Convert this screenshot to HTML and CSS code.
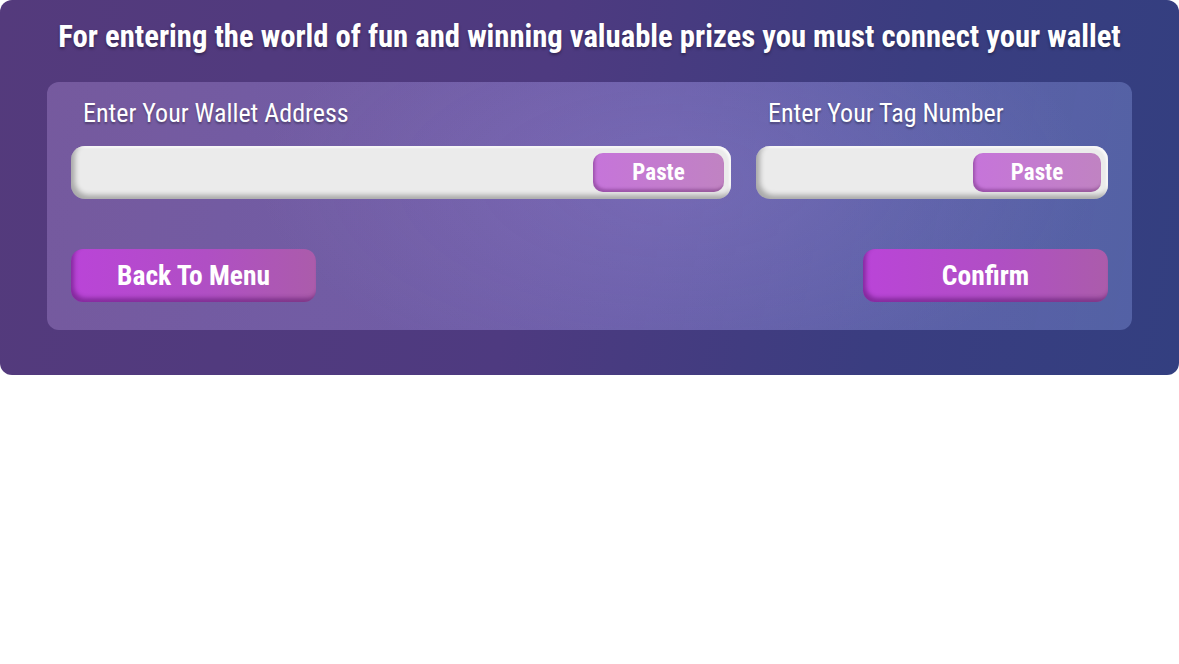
FILE: index.html
```html
<!DOCTYPE html>
<html lang="en">
<head>
<meta charset="utf-8">
<title>Connect Wallet</title>
<link rel="stylesheet" href="styles.css">
</head>
<body>
<main class="modal">
  <h1 class="title">For entering the world of fun and winning valuable prizes you must connect your wallet</h1>
  <section class="panel">
    <div class="fields">
      <div class="field field-wallet">
        <label class="label">Enter Your Wallet Address</label>
        <div class="input">
          <span class="input-space"></span>
          <button class="paste">Paste</button>
        </div>
      </div>
      <div class="field field-tag">
        <label class="label">Enter Your Tag Number</label>
        <div class="input">
          <span class="input-space"></span>
          <button class="paste paste-tag">Paste</button>
        </div>
      </div>
    </div>
    <div class="actions">
      <button class="btn">Back To Menu</button>
      <button class="btn">Confirm</button>
    </div>
  </section>
</main>
</body>
</html>
```
FILE: styles.css
```css
* { box-sizing: border-box; }
html, body { margin: 0; padding: 0; background: #ffffff; }
body { font-family: "Roboto Condensed", Roboto, "Liberation Sans", sans-serif; }

.modal {
  width: 1179px;
  height: 375px;
  border-radius: 12px;
  background: linear-gradient(100deg, #543a7c 0%, #4e3a80 45%, #3a3d80 75%, #333f80 100%);
  padding: 17px 47px 0 47px;
  display: flex;
  flex-direction: column;
  align-items: stretch;
}

.title {
  margin: 0;
  text-align: center;
  color: #fff;
  font-weight: 700;
  font-size: 30.7px;
  line-height: 40px;
  letter-spacing: 0;
  text-shadow: 0 2px 3px rgba(0,0,0,0.35);
  white-space: nowrap;
}

.panel {
  margin-top: 25px;
  height: 248px;
  border-radius: 12px;
  background:
    radial-gradient(ellipse 420px 200px at 58% 40%, rgba(170,150,230,0.18), rgba(170,150,230,0) 100%),
    linear-gradient(100deg, rgba(160,130,200,0.45) 0%, rgba(150,140,220,0.45) 55%, rgba(130,150,220,0.4) 100%);
  padding: 13px 24px 0 24px;
  display: flex;
  flex-direction: column;
}

.fields { display: flex; gap: 25px; }
.field { display: flex; flex-direction: column; }
.field-wallet { width: 660px; }
.field-tag { flex: 1; }

.label {
  color: #fff;
  font-size: 26px;
  line-height: 36px;
  padding-left: 12px;
  text-shadow: 0 2px 2px rgba(0,0,0,0.3);
}

.input {
  margin-top: 15px;
  height: 53px;
  border-radius: 14px;
  background: #ebebeb;
  box-shadow: inset 4px -4px 5px rgba(0,0,0,0.28), inset -2px 2px 2px rgba(255,255,255,0.7);
  display: flex;
  align-items: center;
  padding: 0 7px 0 0;
}
.input-space { flex: 1; }

.paste {
  width: 131px;
  height: 39px;
  border: none;
  border-radius: 10px;
  background: linear-gradient(90deg, #c674da 0%, #c083c2 100%);
  color: #fff;
  font-family: inherit;
  font-weight: 700;
  font-size: 23px;
  box-shadow: inset 2px -3px 3px rgba(80,20,90,0.35);
  padding: 0;
}
.paste-tag { width: 128px; }

.actions {
  margin-top: 50px;
  display: flex;
  justify-content: space-between;
}

.btn {
  width: 245px;
  height: 53px;
  border: none;
  border-radius: 12px;
  background: linear-gradient(90deg, #ba44d8 0%, #b04fc4 55%, #ab5cab 100%);
  color: #fff;
  font-family: inherit;
  font-weight: 700;
  font-size: 27.5px;
  box-shadow: inset 3px -4px 4px rgba(70,10,90,0.45);
  padding: 0;
}
```
